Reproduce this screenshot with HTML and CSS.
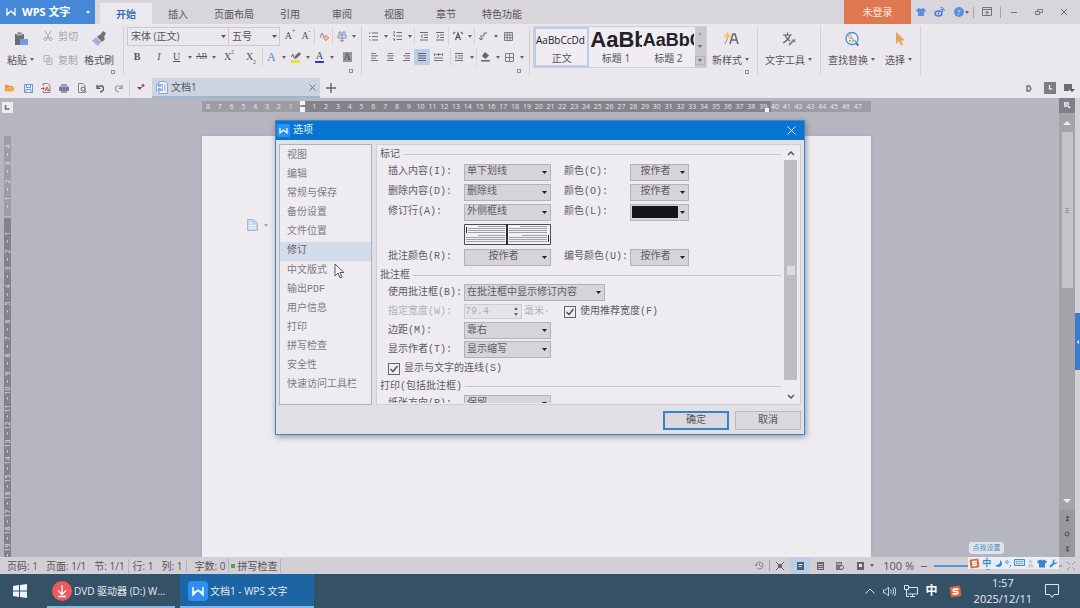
FILE: index.html
```html
<!DOCTYPE html>
<html lang="zh-CN">
<head>
    <meta charset="UTF-8">
    <meta name="viewport" content="width=device-width, initial-scale=1.0">
    <title>文档1 - WPS 文字</title>
    <link rel="stylesheet" href="styles.css">
</head>
<body>
    <!-- Title bar -->
    <header class="titlebar">
        <button class="brand">
            <svg width="10" height="10" viewBox="0 0 10 10"><path d="M1 1v7l4-4 4 4V1M1 8l2-3M9 8L7 5" fill="none" stroke="#fff" stroke-width="1.2"/></svg>
            <span>WPS 文字</span>
            <i class="caret"></i>
        </button>
        <nav class="tabs">
            <button class="tab active">开始</button>
            <button class="tab">插入</button>
            <button class="tab">页面布局</button>
            <button class="tab">引用</button>
            <button class="tab">审阅</button>
            <button class="tab">视图</button>
            <button class="tab">章节</button>
            <button class="tab">特色功能</button>
        </nav>
        <button class="login">未登录</button>
        <div class="window-tools">
            <button aria-label="皮肤"><svg width="10" height="10" viewBox="0 0 10 10"><path d="M3 1L0 3l1 2 1-.5V9h6V4.500l1 .5 1-2-3-2-2 1z" fill="#5b8fe6"/></svg></button>
            <button aria-label="微博"><svg width="11" height="10" viewBox="0 0 11 10"><ellipse cx="4.500" cy="6.500" rx="3.500" ry="2.500" fill="none" stroke="#4a80dc" stroke-width="1.500"/><circle cx="4.500" cy="6.500" r="1" fill="#4a80dc"/><path d="M6.500 2.500l2 0 0 2M6.500 .7c2.500-.5 4 1 3.500 3.500" fill="none" stroke="#4a80dc"/></svg></button>
            <button aria-label="帮助" class="help"><span>?</span><i class="caret"></i></button>
            <i class="bar-sep"></i>
            <button aria-label="隐藏功能区" class="wide"><svg width="10" height="10" viewBox="0 0 10 10"><path d="M.5 .5h9v8h-9zM.5 2.500h9M5 8V4.500M3 6.200L5 4.300l2 1.900" fill="none" stroke="#77757c"/></svg></button>
            <i class="bar-sep"></i>
            <button aria-label="最小化" class="win"><svg width="8" height="8" viewBox="0 0 8 8"><path d="M1 4.500h6" stroke="#77757c"/></svg></button>
            <button aria-label="还原" class="win"><svg width="8" height="8" viewBox="0 0 8 8"><path d="M.5 3.500h4v3h-4zM2.500 3.500v-2h5v3h-3" fill="none" stroke="#77757c"/></svg></button>
            <button aria-label="关闭" class="win"><svg width="8" height="8" viewBox="0 0 8 8"><path d="M1 1l6 6M7 1L1 7" stroke="#66646b"/></svg></button>
        </div>
    </header>

    <!-- Ribbon -->
    <section class="ribbon">
        <div class="group clipboard">
            <div class="group-body">
                <button class="big">
                    <svg width="16" height="16" viewBox="0 0 16 16"><path d="M2 3h9v11H2z" fill="#6d6b74"/><path d="M4 1h5v3H4z" fill="#8f8d96" stroke="#e9e7ec" stroke-width=".6"/><path d="M7 8h8v6H7z" fill="#6f9fe3"/></svg>
                    <span>粘贴<i class="caret"></i></span>
                </button>
                <div class="clip">
                    <button class="small"><svg width="10" height="10" viewBox="0 0 10 10"><path d="M2 0l4 7M8 0L4 7" stroke="#a5a3aa" fill="none"/><circle cx="2.500" cy="8" r="1.500" fill="none" stroke="#a5a3aa"/><circle cx="7.500" cy="8" r="1.500" fill="none" stroke="#a5a3aa"/></svg>剪切</button>
                    <button class="small"><svg width="10" height="10" viewBox="0 0 10 10"><path d="M1 .5h5v6H1zM4 3h5v6.500H4zM5.500 5h2M5.500 7h2" fill="#e9e7ec" stroke="#b5b3ba"/></svg>复制</button>
                </div>
                <button class="big painter">
                    <svg width="16" height="16" viewBox="0 0 16 16"><path d="M9 4l3-4 3 2-2 4 1 2-3 3-5-5 2-2z" fill="#74717a"/><path d="M5 6l5 5-3 4-6-5z" fill="#b9a3e2"/></svg>
                    <span>格式刷</span>
                </button>
            </div>
            <button class="launcher" aria-label="剪贴板"></button>
        </div>

        <div class="group">
            <div class="tool-row fonts">
                <select class="font-name" aria-label="字体"><option>宋体 (正文)</option></select>
                <select class="font-size" aria-label="字号"><option>五号</option></select>
                <button class="tool">A<sup>+</sup></button>
                <button class="tool">A<sup>-</sup></button>
                <i class="sep"></i>
                <button class="tool" aria-label="清除格式"><svg width="10" height="11" viewBox="0 0 10 11"><path d="M1 7l2-5 2 4" fill="none" stroke="#8a8890"/><path d="M4 7l3-3 3 3-3 3z" fill="#efb78d" stroke="#d08c60" stroke-width=".7"/></svg></button>
                <i class="sep"></i>
                <button class="tool drop" aria-label="拼音指南"><svg width="10" height="11" viewBox="0 0 10 11"><path d="M1 2h8M3 0v2M7 0v2" stroke="#6b93d8" fill="none"/><path d="M1 4h8v3H1zM5 3v8M3 9l2 1.500L7 9" stroke="#7c8cab" fill="none"/></svg><i class="caret"></i></button>
            </div>
            <div class="tool-row">
                <button class="tool w22"><b>B</b></button>
                <button class="tool w22"><em>I</em></button>
                <button class="tool drop"><u>U</u><i class="caret"></i></button>
                <button class="tool drop strike"><s>AB</s><i class="caret"></i></button>
                <button class="tool w22">X<sup>2</sup></button>
                <button class="tool w22">X<sub>2</sub></button>
                <i class="sep"></i>
                <button class="tool drop fx"><span>A</span><i class="caret"></i></button>
                <button class="tool drop" aria-label="突出显示"><svg width="10" height="11" viewBox="0 0 10 11"><path d="M0 8h9v3H0z" fill="#e6e03a"/><path d="M3 7l1-3 4-4 2 2-4 4z" fill="#6a6972"/><path d="M0 5l2-3 1 4" fill="none" stroke="#6a6972"/></svg><i class="caret"></i></button>
                <button class="tool drop color"><span>A</span><i class="caret"></i></button>
                <button class="tool w22 shade"><span>A</span></button>
            </div>
            <button class="launcher" aria-label="字体设置"></button>
        </div>

        <div class="group para">
            <div class="tool-row">
                <button class="tool drop" aria-label="项目符号"><svg width="9" height="9" viewBox="0 0 9 9"><path d="M0 1h1.500M0 4.500h1.500M0 8h1.500M3 1h6M3 4.500h6M3 8h6" stroke="#6e6c74"/></svg><i class="caret"></i></button>
                <button class="tool drop" aria-label="编号"><svg width="9" height="10" viewBox="0 0 9 10"><path d="M1 0v2.500M0 4h1.500v1.500M0 8h1.500v2M3.500 1.500H9M3.500 5H9M3.500 8.500H9" stroke="#6e6c74" fill="none"/></svg><i class="caret"></i></button>
                <i class="sep"></i>
                <button class="tool" aria-label="减少缩进"><svg width="8" height="9" viewBox="0 0 8 9"><path d="M0 .5h8M4 3h4M4 5.500h4M0 8h8M3 2.500L1 4.300l2 1.800" stroke="#6e6c74" fill="none"/></svg></button>
                <button class="tool" aria-label="增加缩进"><svg width="8" height="9" viewBox="0 0 8 9"><path d="M0 .5h8M4 3h4M4 5.500h4M0 8h8M1 2.500l2 1.800-2 1.800" stroke="#6e6c74" fill="none"/></svg></button>
                <i class="sep"></i>
                <button class="tool drop" aria-label="中文版式"><svg width="10" height="10" viewBox="0 0 10 10"><path d="M2.500 9L5 2l2.500 7M3.500 6.500h3M0 3l2-2M10 3L8 1" stroke="#55535a" fill="none" stroke-width="1.200"/></svg><i class="caret"></i></button>
                <i class="sep"></i>
                <button class="tool drop" aria-label="排序"><svg width="8" height="9" viewBox="0 0 8 9"><path d="M2 3v5M0 6l2 2 2-2M3 4h2V1h3" stroke="#6e6c74" fill="none"/></svg><i class="caret"></i></button>
                <button class="tool" aria-label="表格"><svg width="9" height="9" viewBox="0 0 9 9"><path d="M.5 .5h8v8h-8zM.5 3h8M.5 5.700h8M3.200 .5v8M6 .5v8" stroke="#7e7c84" fill="none"/></svg></button>
            </div>
            <div class="tool-row">
                <button class="tool" aria-label="左对齐"><svg width="7" height="8" viewBox="0 0 7 8"><path d="M0 .5h5M0 2.800h7M0 5.200h5M0 7.500h7" stroke="#77757d"/></svg></button>
                <button class="tool" aria-label="居中"><svg width="7" height="8" viewBox="0 0 7 8"><path d="M1 .5h5M0 2.800h7M1 5.200h5M0 7.500h7" stroke="#77757d"/></svg></button>
                <button class="tool" aria-label="右对齐"><svg width="7" height="8" viewBox="0 0 7 8"><path d="M2 .5h5M0 2.800h7M2 5.200h5M0 7.500h7" stroke="#77757d"/></svg></button>
                <button class="tool on" aria-label="两端对齐"><svg width="8" height="8" viewBox="0 0 8 8"><path d="M0 .5h8M0 2.800h8M0 5.200h8M0 7.500h8" stroke="#5f6877"/></svg></button>
                <button class="tool" aria-label="分散对齐"><svg width="9" height="8" viewBox="0 0 9 8"><path d="M.5 0v3M8.500 0v3M1.500 1.500h6M0 5h9M0 7.500h9M4.500 0v3" stroke="#77757d"/></svg></button>
                <i class="sep after-align"></i>
                <button class="tool drop" aria-label="行距"><svg width="8" height="8" viewBox="0 0 8 8"><path d="M0 .5h8M3 2.800h5M3 5.200h5M0 7.500h8M1 2v4" stroke="#6e6c74"/></svg><i class="caret"></i></button>
                <i class="sep"></i>
                <button class="tool drop" aria-label="底纹颜色"><svg width="9" height="10" viewBox="0 0 9 10"><path d="M4 0l4 3.500L4.500 7 1 4z" fill="#66646c"/><path d="M0 8h9v1.500H0z" fill="#66646c"/></svg><i class="caret"></i></button>
                <button class="tool drop" aria-label="边框"><svg width="9" height="9" viewBox="0 0 9 9"><path d="M.5 .5h8v8h-8zM4.500 .5v8M.5 4.500h8" stroke="#7e7c84" fill="none"/></svg><i class="caret"></i></button>
            </div>
            <button class="launcher" aria-label="段落设置"></button>
        </div>

        <div class="group styles">
            <div class="group-body">
                <div class="gallery">
                    <button class="style-cell selected"><span class="sample">AaBbCcDd</span><span>正文</span></button>
                    <button class="style-cell"><span class="sample h1">AaBb</span><span>标题 1</span></button>
                    <button class="style-cell"><span class="sample h2">AaBbC</span><span>标题 2</span></button>
                    <div class="gallery-scroll">
                        <i class="caret up"></i>
                        <i class="caret"></i>
                        <i class="caret more"></i>
                    </div>
                </div>
                <button class="big">
                    <svg width="16" height="16" viewBox="0 0 16 16"><path d="M7 13l3-10h2l3 10M9 9h4" fill="none" stroke="#66646c" stroke-width="1.500"/><path d="M2 13l3-7" stroke="#8f8d96"/><path d="M4.500 1v8M1 5h7M2 2.500l5 5M7 2.500l-5 5" stroke="#eebf4e"/></svg>
                    <span>新样式<i class="caret"></i></span>
                </button>
            </div>
            <button class="launcher" aria-label="样式设置"></button>
        </div>

        <div class="group">
            <div class="group-body">
                <button class="big">
                    <svg width="16" height="16" viewBox="0 0 16 16"><path d="M2 4h9M6.500 1.500V4M9 4c-1 4-3 6-7 8M4 4c1 3 3 5 5 6" fill="none" stroke="#66646c" stroke-width="1.200"/><path d="M8 14l3.500-3.500" stroke="#7d84a5" stroke-width="2"/><path d="M14 7l-1 2-2-1c-1 2 1 4 3.500 3z" fill="#7d84a5"/></svg>
                    <span>文字工具<i class="caret"></i></span>
                </button>
            </div>
        </div>

        <div class="group">
            <div class="group-body">
                <button class="big">
                    <svg width="16" height="16" viewBox="0 0 16 16"><circle cx="8" cy="7.500" r="6" fill="#f1f2f7" stroke="#4a8bd6" stroke-width="1.300"/><path d="M12 12l2.500 2.500" stroke="#3a78c8" stroke-width="2"/><circle cx="6" cy="5.500" r="1.600" fill="none" stroke="#d09a62"/><path d="M7 7l2 1M8.500 11c1-3 2-3 3 0M5 9l2 1.500" fill="none" stroke="#6d7486"/></svg>
                    <span>查找替换<i class="caret"></i></span>
                </button>
                <button class="big">
                    <svg width="16" height="16" viewBox="0 0 16 16"><path d="M5 1v12l3-3 2 4.500 2-1L10 9.500h4z" fill="#e2a45e"/></svg>
                    <span>选择<i class="caret"></i></span>
                </button>
            </div>
        </div>
    </section>

    <!-- Quick access and document tabs -->
    <section class="quickbar">
        <div class="quick-tools">
            <button aria-label="打开"><svg width="10" height="10" viewBox="0 0 10 10"><path d="M0 2h3.500l1 1H8v1.500H3L1 8.500H0z" fill="#e5973f"/><path d="M3 4.500h7l-2 4H1z" fill="#f0a94f"/></svg></button>
            <button aria-label="保存"><svg width="9" height="9" viewBox="0 0 9 9"><path d="M.5 .5h8v8h-8zM2.500 .5v3h4v-3M2 8.500v-3h5v3" fill="#eaf0fa" stroke="#6b98da"/></svg></button>
            <button aria-label="输出PDF"><svg width="10" height="10" viewBox="0 0 10 10"><path d="M2 3V.5h4.500l2.500 2V9.500H2V8" fill="none" stroke="#85838b"/><path d="M0 5.500h3M2 4l1.500 1.500L2 7M4 8l2-4 2 4-3-1.500" fill="none" stroke="#cf4b50"/></svg></button>
            <button aria-label="打印"><svg width="10" height="9" viewBox="0 0 10 9"><path d="M2 0h6v2H2zM2 6h6v3H2z" fill="#9a97b8"/><path d="M0 2.500h10V7H0z" fill="#7d7aa5"/></svg></button>
            <button aria-label="打印预览"><svg width="10" height="10" viewBox="0 0 10 10"><path d="M1.500 .5H6l2 2V9.500H1.500z" fill="none" stroke="#85838b"/><circle cx="6" cy="6" r="2" fill="#e9e7ec" stroke="#66646c"/><path d="M7.500 7.500L9.500 9.500" stroke="#66646c"/></svg></button>
            <button aria-label="撤销"><svg width="9" height="9" viewBox="0 0 9 9"><path d="M1 4c2-3 6-3 6.500 0S5 8 4 8M1 .8V4.300h3.500" fill="none" stroke="#5d5b63" stroke-width="1.300"/></svg></button>
            <button aria-label="恢复"><svg width="9" height="9" viewBox="0 0 9 9"><path d="M8 4C6 1 2 1 1.500 4S4 8 5 8M8 .8V4.300H4.500" fill="none" stroke="#96949b" stroke-width="1.200"/></svg></button>
            <i class="sep"></i>
            <button aria-label="自定义"><svg width="8" height="8" viewBox="0 0 8 8"><path d="M0 3h5L3 6z" fill="#55535a"/><circle cx="6" cy="1.500" r="1.500" fill="#e0433f"/></svg></button>
        </div>
        <div class="doc-tab">
            <svg width="12" height="13" viewBox="0 0 12 13"><path d="M3 .5h6l2.500 2.500v9.500H3z" fill="#f2f3f8" stroke="#8fa6c9"/><path d="M0 3h7v7H0z" fill="#8ab2e6"/><path d="M1.500 4.500v4M5.500 4.500v4M1.500 6.500h4" stroke="#fff"/><path d="M8 5h2M8 7h2M8 9h2" stroke="#8fa6c9"/></svg>
            <span>文档1</span>
            <button aria-label="关闭文档"><svg width="7" height="7" viewBox="0 0 7 7"><path d="M.5 .5l6 6M6.500 .5l-6 6" stroke="#66707f"/></svg></button>
        </div>
        <button class="add-tab" aria-label="新建文档"><svg width="10" height="10" viewBox="0 0 10 10"><path d="M5 0v10M0 5h10" stroke="#66646c" stroke-width="1.400"/></svg></button>
        <div class="quick-right">
            <svg width="6" height="7" viewBox="0 0 6 7"><path d="M1 1h2.500L5 3.500 3.500 6H1z" fill="none" stroke="#77757d" stroke-width="1.500"/></svg>
            <svg width="12" height="12" viewBox="0 0 12 12"><path d="M0 0h12v12H0z" fill="#7e7c85"/><path d="M5.500 3v4h3" fill="none" stroke="#fff" stroke-width="1.200"/></svg>
            <svg width="11" height="10" viewBox="0 0 11 10"><path d="M0 1h8v5H5v2H0z" fill="#6e6c75"/><path d="M5 6h6L8 9z" fill="#55535b"/></svg>
        </div>
    </section>

    <!-- Document area -->
    <main class="workspace">
        <div class="v-side">
            <button class="tab-stop" aria-label="制表符"><svg width="11" height="11" viewBox="0 0 11 11"><path d="M3.500 3v4h4" fill="none" stroke="#66646c" stroke-width="1.500"/></svg></button>
            <div class="v-ruler" id="vRuler"></div>
        </div>
        <div class="canvas">
            <div class="h-ruler" id="hRuler"></div>
            <div class="paper"></div>
        </div>
        <div class="v-scroll">
            <button class="scroll-head" aria-label="选择"><svg width="9" height="9" viewBox="0 0 9 9"><path d="M1 1h5v5H1z" fill="#d8d7dd"/><path d="M4 4l4 2-2 2zM3 3h2" fill="#fff" stroke="#7f7f87" stroke-width=".5"/></svg></button>
            <button class="scroll-up" aria-label="向上滚动"><i class="caret up"></i></button>
            <div class="thumb"><i></i><i></i><i></i></div>
            <button class="scroll-down" aria-label="向下滚动"><i class="caret"></i></button>
            <div class="browse">
                <svg width="5" height="7" viewBox="0 0 5 7"><path d="M.5 3l2-2.500 2 2.500zM.5 6l2-2.500 2 2.500z" fill="#4c4b53"/></svg>
                <svg width="6" height="6" viewBox="0 0 6 6"><circle cx="3" cy="3" r="2" fill="none" stroke="#4c4b53"/></svg>
                <svg width="5" height="7" viewBox="0 0 5 7"><path d="M.5 .5l2 2.500 2-2.500zM.5 3.500l2 2.500 2-2.500z" fill="#4c4b53"/></svg>
            </div>
        </div>
        <div class="edge"><button class="edge-tab" aria-label="任务窗格"></button></div>

        <div class="paste-hint">
            <svg width="11" height="12" viewBox="0 0 11 12"><path d="M.5 .5h6l4 3.500v7.500H.5z" fill="#c5d6ea" stroke="#a3bad6"/><path d="M2 4h3M2 6.500h7M2 9h7" stroke="#fff"/></svg>
            <i class="caret"></i>
        </div>

        <!-- Options dialog -->
        <div class="dialog" role="dialog" aria-label="选项">
            <div class="dialog-title">
                <svg width="13" height="13" viewBox="0 0 13 13"><rect width="13" height="13" rx="2" fill="#2b93f0"/><path d="M3 4v5l3.500-3L10 9V4" fill="none" stroke="#fff" stroke-width="1.200"/></svg>
                <span>选项</span>
                <button aria-label="关闭"><svg width="9" height="9" viewBox="0 0 9 9"><path d="M.5 .5l8 8M8.500 .5l-8 8" stroke="#d9eafb"/></svg></button>
            </div>
            <div class="dialog-body">
                <ul class="categories">
                    <li>视图</li>
                    <li>编辑</li>
                    <li>常规与保存</li>
                    <li>备份设置</li>
                    <li>文件位置</li>
                    <li class="current">修订</li>
                    <li>中文版式</li>
                    <li>输出PDF</li>
                    <li>用户信息</li>
                    <li>打印</li>
                    <li>拼写检查</li>
                    <li>安全性</li>
                    <li>快速访问工具栏</li>
                </ul>
                <div class="panel">
                    <form class="options">
                        <h3>标记</h3>
                        <div class="row">
                            <label for="insert">插入内容(I):</label>
                            <select id="insert"><option>单下划线</option></select>
                            <label for="insertColor">颜色(C):</label>
                            <select id="insertColor" class="by-author"><option>按作者</option></select>
                        </div>
                        <div class="row">
                            <label for="remove">删除内容(D):</label>
                            <select id="remove"><option>删除线</option></select>
                            <label for="removeColor">颜色(O):</label>
                            <select id="removeColor" class="by-author"><option>按作者</option></select>
                        </div>
                        <div class="row">
                            <label for="lines">修订行(A):</label>
                            <select id="lines"><option>外侧框线</option></select>
                            <label for="linesColor">颜色(L):</label>
                            <select id="linesColor" class="swatch"><option></option></select>
                        </div>
                        <svg class="preview" width="87" height="21" viewBox="0 0 87 21">
                            <path d="M.5 .5h86v20H.5z" fill="#f2f0f5" stroke="#4b4a50"/>
                            <path d="M43 0v21" stroke="#2d2c31" stroke-width="2"/>
                            <path d="M14 2.500h27M4 4.500h37M4 6.500h37M4 8.500h37M14 11.500h27M2 13.500h39M2 15.500h39M2 17.500h39M56 2.500h27M45 4.500h38M45 6.500h38M45 8.500h38M58 11.500h25M45 13.500h38M45 15.500h38M45 17.500h38" stroke="#a3a2a8"/>
                            <path d="M2.500 3v6M84.500 11v7" stroke="#2d2c31"/>
                        </svg>
                        <div class="row">
                            <label for="noteColor">批注颜色(R):</label>
                            <select id="noteColor" class="centered"><option>按作者</option></select>
                            <label for="numColor">编号颜色(U):</label>
                            <select id="numColor" class="by-author"><option>按作者</option></select>
                        </div>

                        <h3>批注框</h3>
                        <div class="row tight">
                            <label for="balloon">使用批注框(B):</label>
                            <select id="balloon" class="long"><option>在批注框中显示修订内容</option></select>
                        </div>
                        <div class="row tight">
                            <label for="width" class="off">指定宽度(W):</label>
                            <span class="spin"><input type="text" id="width" value="79.4" disabled><span><i class="caret up"></i><i class="caret"></i></span></span>
                            <span class="unit">毫米·</span>
                            <input type="checkbox" id="useWidth" checked>
                            <label for="useWidth" class="check-label">使用推荐宽度(F)</label>
                        </div>
                        <div class="row tight">
                            <label for="margin">边距(M):</label>
                            <select id="margin"><option>靠右</option></select>
                        </div>
                        <div class="row tight">
                            <label for="author">显示作者(T):</label>
                            <select id="author"><option>显示缩写</option></select>
                        </div>
                        <div class="row tight">
                            <input type="checkbox" id="connect" checked>
                            <label for="connect" class="check-label">显示与文字的连线(S)</label>
                        </div>

                        <h3>打印(包括批注框)</h3>
                        <div class="row tight">
                            <label for="paper">纸张方向(P):</label>
                            <select id="paper"><option>保留</option></select>
                        </div>
                    </form>
                    <div class="panel-scroll">
                        <svg width="14" height="15" viewBox="0 0 14 15"><path d="M4 10l3-3 3 3" fill="none" stroke="#55545a" stroke-width="1.500"/></svg>
                        <div class="panel-track"><i></i></div>
                        <svg width="14" height="24" viewBox="0 0 14 24"><path d="M4 15l3 3 3-3" fill="none" stroke="#55545a" stroke-width="1.500"/></svg>
                    </div>
                </div>
            </div>
            <div class="dialog-foot">
                <button class="default">确定</button>
                <button>取消</button>
            </div>
        </div>

        <svg class="pointer" width="11" height="16" viewBox="0 0 11 16"><path d="M1 1v12l3-3 2 5 2-1-2-4.500h4z" fill="#f5f4f8" stroke="#55545a"/></svg>
    </main>

    <!-- Status bar -->
    <footer class="statusbar">
        <div class="status-left">
            <span>页码: 1</span>
            <span>页面: 1/1</span>
            <span class="cut">节: 1/1</span>
            <span>行: 1</span>
            <span class="cut">列: 1</span>
            <span class="cut count">字数: 0</span>
            <span class="cut spell">拼写检查</span>
        </div>
        <div class="status-right">
            <button aria-label="历史"><svg width="9" height="9" viewBox="0 0 9 9"><path d="M1 4.500a3.500 3.500 0 1 1 1 2.500M0 3l1 2 1.500-1.500M4.500 2.500v2l2 1" fill="none" stroke="#85838a"/></svg></button>
            <i class="bar-sep"></i>
            <button aria-label="全屏"><svg width="8" height="8" viewBox="0 0 8 8"><path d="M2 2h4v4H2z" fill="#66646b"/><path d="M0 0l2 2M8 0L6 2M0 8l2-2M8 8L6 6" stroke="#66646b"/></svg></button>
            <button class="on" aria-label="页面视图"><svg width="7" height="8" viewBox="0 0 7 8"><path d="M0 0h7v8H0z" fill="#4f5f78"/><path d="M1.500 2.500h4M1.500 4.500h3" stroke="#dbe4f2"/></svg></button>
            <button aria-label="大纲视图"><svg width="7" height="8" viewBox="0 0 7 8"><path d="M0 0h7v8H0z" fill="#66646b"/><path d="M1 2.500h5M1 4.500h5M1 6.500h5" stroke="#d3d0d5" stroke-width=".8"/></svg></button>
            <button aria-label="Web视图"><svg width="8" height="8" viewBox="0 0 8 8"><path d="M0 0h6v8H0z" fill="#77757c"/><circle cx="5.500" cy="5.500" r="2" fill="#d3d0d5" stroke="#66646b"/><path d="M1 2h4" stroke="#d3d0d5"/></svg></button>
            <button class="view-drop" aria-label="阅读视图"><svg width="7" height="8" viewBox="0 0 7 8"><path d="M0 0h7v8H0z" fill="#66646b"/><path d="M2 2h3v3H2z" fill="#e6e4ea"/></svg><i class="caret"></i></button>
            <span class="zoom">100 %</span>
            <button class="minus" aria-label="缩小"><svg width="6" height="6" viewBox="0 0 6 6"><path d="M0 3.500h6" stroke="#66646b"/></svg></button>
            <input type="range" class="zoom-range" aria-label="显示比例" min="0" max="100" value="42">
            <button class="grow" aria-label="展开"><svg width="8" height="8" viewBox="0 0 8 8"><path d="M0 0l2.500 2.500M8 0L5.500 2.500M0 8l2.500-2.500M8 8L5.500 5.500" stroke="#77757c" stroke-dasharray="1.500 .7"/></svg></button>
        </div>
        <!-- Input method bar floats above the status bar -->
        <div class="ime">
            <div class="ime-tip">点我设置</div>
            <div class="ime-bar">
                <svg width="11" height="11" viewBox="0 0 11 11"><rect x="1" y="1" width="9" height="9" rx="1.500" fill="#e0673a" transform="rotate(-8 5.500 5.500)"/><path d="M8 3.500H4.500a1 1 0 0 0 0 2h2a1 1 0 0 1 0 2H3" fill="none" stroke="#fff" stroke-width="1.300"/></svg>
                <b>中</b>
                <svg width="9" height="9" viewBox="0 0 9 9"><path d="M6 1c1 3-1 5-5 5.500C4 9 8 8 8 4.500 8 3 7 1.500 6 1z" fill="#3d83cf"/></svg>
                <svg width="7" height="9" viewBox="0 0 7 9"><circle cx="2" cy="3" r="1.300" fill="none" stroke="#3d83cf" stroke-width=".8"/><path d="M5.500 6v1.500l-1 1" fill="none" stroke="#3d83cf"/></svg>
                <svg width="11" height="8" viewBox="0 0 11 8"><path d="M.5 .5h10v6H.5z" fill="#cfe2f7" stroke="#4b8dd5"/><path d="M2 2.500h7M2 4.500h7" stroke="#4b8dd5" stroke-dasharray="1 .6"/></svg>
                <svg width="7" height="9" viewBox="0 0 7 9"><circle cx="3.500" cy="2.500" r="1.800" fill="#c9ced8"/><path d="M.5 8.500c0-5 6-5 6 0z" fill="#c9ced8"/></svg>
                <svg width="10" height="9" viewBox="0 0 10 9"><path d="M3 .5L0 2.500l1 2 1-.5v4.500h6V4l1 .5 1-2L7 .5l-2 1z" fill="#3d83cf"/></svg>
                <svg width="9" height="9" viewBox="0 0 9 9"><path d="M1 8l4-4" stroke="#3d83cf" stroke-width="2"/><path d="M8.500 2.500L7 4 5.500 3.500 5 2 6.500 .5C4 0 3 2 4 4s4 1.500 4.500-1.500z" fill="#3d83cf"/></svg>
            </div>
        </div>
    </footer>

    <!-- Taskbar -->
    <footer class="taskbar">
        <button class="start" aria-label="开始菜单"><svg width="14" height="14" viewBox="0 0 14 14"><path d="M0 2l6-1v5.500H0zM7 .900L14 0v6.500H7zM0 7.500h6V13l-6-1zM7 7.500h7V14l-7-.9z" fill="#f1f5f9"/></svg></button>
        <button class="task">
            <svg width="20" height="20" viewBox="0 0 20 20"><circle cx="10" cy="10" r="10" fill="#ef5a5c"/><path d="M10 4v9M6 9.500l4 4 4-4M6 15.500h8" fill="none" stroke="#fff" stroke-width="1.300"/></svg>
            <span>DVD 驱动器 (D:) W...</span>
        </button>
        <button class="task current">
            <svg width="20" height="20" viewBox="0 0 20 20"><rect width="20" height="20" rx="4" fill="#2e8ff2"/><path d="M5 6v8l5-5 5 5V6M5 14l2.500-4M15 14l-2.500-4" fill="none" stroke="#fff" stroke-width="1.500"/></svg>
            <span>文档1 - WPS 文字</span>
        </button>
        <div class="tray">
            <svg width="10" height="6" viewBox="0 0 10 6"><path d="M.5 5.500L5 1l4.500 4.500" fill="none" stroke="#dfe6ec"/></svg>
            <svg width="13" height="11" viewBox="0 0 13 11"><path d="M.5 4h2L5.500 1v9l-3-3h-2zM7.500 3.500c1 1.500 1 2.500 0 4M9.500 2c1.500 2 1.500 5 0 7M11.500 1c1.500 2.500 1.500 6.500 0 9" fill="none" stroke="#dfe6ec" stroke-width=".9"/></svg>
            <svg width="14" height="12" viewBox="0 0 14 12"><path d="M4 2.500h9.500v6.500H4M8.500 9v2M6 11.500h5M.5 .5h4v4h-4zM2.500 4.500V11.500H5" fill="none" stroke="#dfe6ec"/></svg>
            <b>中</b>
            <svg width="13" height="13" viewBox="0 0 11 11"><rect x="1" y="1" width="9" height="9" rx="1.500" fill="#e0673a" transform="rotate(-8 5.500 5.500)"/><path d="M8 3.500H4.500a1 1 0 0 0 0 2h2a1 1 0 0 1 0 2H3" fill="none" stroke="#fff" stroke-width="1.300"/></svg>
            <div class="clock"><span>1:57</span><span>2025/12/11</span></div>
            <svg width="14" height="14" viewBox="0 0 14 14"><path d="M.5 .5h13v10H9l-2 3-2-3H.5z" fill="none" stroke="#dfe6ec"/></svg>
        </div>
    </footer>

    <script>
        // Fill a ruler: numbers count down to the margin, then up to the end
        function buildRuler(id, before, after) {
            const ruler = document.getElementById(id);
            for (let n = -before; n <= after; n++) {
                const cell = document.createElement('span');
                if (n === 0) {
                    cell.className = 'zero';
                } else {
                    cell.textContent = Math.abs(n);
                }
                ruler.appendChild(cell);
            }
        }
        buildRuler('hRuler', 8, 47);
        buildRuler('vRuler', 4, 19);
        document.querySelector('#hRuler span:nth-child(48)').classList.add('right-indent');
    </script>
</body>
</html>
```
FILE: styles.css
```css
* {
    box-sizing: border-box;
}
body {
    margin: 0;
    height: 100vh;
    display: flex;
    flex-direction: column;
    overflow: hidden;
    font-family: "Open Sans", "Noto Sans CJK SC", sans-serif;
    font-size: 10px;
    line-height: 14px;
    color: #55535a;
    background-color: #b6b6c0;
}
button, select, input {
    margin: 0;
    padding: 0;
    border: none;
    background: none;
    font: inherit;
    color: inherit;
}
button {
    display: flex;
    align-items: center;
    justify-content: center;
    white-space: nowrap;
}
svg {
    display: block;
    flex: none;
}
.caret {
    flex: none;
    display: inline-block;
    border: 2px solid transparent;
    border-top: 3px solid #66646b;
    border-bottom: none;
}
.caret.up {
    border-top: none;
    border-bottom: 3px solid #66646b;
}
.sep {
    width: 1px;
    height: 18px;
    background-color: #d6d4da;
    flex: none;
}
.bar-sep {
    width: 1px;
    height: 11px;
    background-color: #a5a3aa;
}

/* Title bar */
.titlebar {
    display: flex;
    height: 24px;
    flex: none;
    background-color: #d8d5db;
}
.brand {
    width: 95px;
    gap: 6px;
    background-color: #4688d8;
    color: #fff;
    font-size: 11px;
    font-weight: bold;
    justify-content: flex-start;
    padding-left: 6px;
}
.brand .caret {
    border-top-color: #fff;
    margin-left: auto;
    margin-right: 5px;
}
.tabs {
    display: flex;
    flex: 1;
    padding: 3px 0 0 5px;
}
.tab {
    min-width: 52px;
    padding: 0 10px;
}
.tab.active {
    background-color: #ebe9ee;
    color: #3a6fb8;
    font-weight: bold;
}
.login {
    width: 67px;
    background-color: #df7750;
    color: #fbe9e0;
}
.window-tools {
    display: flex;
    align-items: center;
    width: 169px;
}
.window-tools button {
    width: 19px;
}
.window-tools button.help {
    width: 24px;
    gap: 1px;
}
.help span {
    width: 10px;
    height: 10px;
    line-height: 10px;
    border-radius: 50%;
    background-color: #5b8fe6;
    color: #dfe9fb;
    font-size: 8px;
}
.window-tools button.wide {
    width: 26px;
}
.window-tools button.win {
    width: 25px;
}

/* Ribbon */
.ribbon {
    display: flex;
    flex: none;
    height: 54px;
    padding-top: 2px;
    background-color: #eae8ed;
}
.group {
    display: flex;
    flex-direction: column;
    height: 49px;
    padding: 0 3px 0 2px;
    border-right: 1px solid #d3d1d7;
}
.group.para {
    padding-left: 4px;
}
.group-body {
    display: flex;
    height: 43px;
}
.launcher {
    align-self: flex-end;
    width: 4px;
    height: 4px;
    margin: 1px 5px 0 0;
    border: 1px solid #8f8d95;
}
.big {
    flex-direction: column;
    justify-content: flex-start;
    gap: 6px;
    padding: 5px 5px 0;
}
.big .caret {
    margin: 0 0 3px 3px;
}
.clipboard .big {
    padding-right: 2px;
}
.clip {
    display: flex;
    flex-direction: column;
    gap: 10px;
    padding: 3px 0 0 7px;
    color: #a5a3aa;
}
.small {
    gap: 5px;
}
.clipboard .painter {
    margin-left: 1px;
    padding-right: 6px;
}
.tool-row {
    display: flex;
    align-items: center;
    height: 22px;
}
.tool-row.fonts {
    padding-left: 1px;
    height: 20px;
}
.tool-row + .tool-row {
    height: 22px;
}
.para .tool-row:first-child {
    height: 20px;
}
.tool {
    width: 16px;
    height: 16px;
    font-family: "Liberation Serif", serif;
}
.tool.w22 {
    width: 22px;
}
.tool.drop {
    width: 24px;
    justify-content: space-between;
    padding: 0 2px 0 3px;
}
.tool.strike {
    padding-left: 2px;
    font-size: 8px;
}
.tool.on {
    background-color: #bccde6;
}
.tool sup, .tool sub {
    font-size: 6px;
    line-height: 6px;
}
.tool sup {
    align-self: flex-start;
}
.tool sub {
    align-self: flex-end;
}
.tool + .sep {
    margin-right: 1px;
}
.tool + .sep.after-align {
    margin-left: 4px;
}
.fx span {
    color: #4f86cc;
    font-size: 12px;
}
.color span {
    line-height: 10px;
    border-bottom: 2px solid #2a38c4;
    padding: 0 1px;
}
.shade span {
    width: 9px;
    line-height: 10px;
    background-color: #97959d;
}
.font-name, .font-size {
    height: 19px;
    padding-left: 3px;
    border: 1px solid #cbc9d0;
    appearance: none;
    background: url("data:image/svg+xml,%3Csvg xmlns='http://www.w3.org/2000/svg' width='5' height='3'%3E%3Cpath d='M0 0h5L2.500 3z' fill='%2355535a'/%3E%3C/svg%3E") no-repeat right 2px center;
}
.font-name {
    width: 102px;
}
.font-size {
    width: 52px;
    margin: 0 2px 0 -1px;
}
.gallery {
    display: flex;
    width: 174px;
    height: 42px;
    margin-left: 1px;
    border: 1px solid #d0ced5;
    background-color: #efedf2;
}
.style-cell {
    flex: 1;
    min-width: 0;
    flex-direction: column;
    justify-content: space-between;
    padding-bottom: 2px;
    margin-right: 1px;
    overflow: hidden;
}
.style-cell.selected {
    border: 2px solid #c0cce6;
    padding-bottom: 0;
}
.sample {
    width: 100%;
    line-height: 22px;
    text-align: left;
    overflow: hidden;
    color: #222126;
}
.sample.h1 {
    font: bold 22px/26px "Liberation Sans", sans-serif;
}
.sample.h2 {
    font: bold 18px/26px "Liberation Sans", sans-serif;
}
.gallery-scroll {
    display: flex;
    flex-direction: column;
    align-items: center;
    justify-content: space-around;
    width: 11px;
    background-color: #cac8ce;
}
.gallery-scroll .up {
    opacity: .4;
}
.caret.more {
    outline: 1px solid #b5b3ba;
    outline-offset: 2px;
}

/* Quick access */
.quickbar {
    display: flex;
    flex: none;
    height: 20px;
    background-color: #eae8ed;
}
.quick-tools {
    display: flex;
    align-items: center;
    width: 152px;
    padding-left: 1px;
}
.quick-tools button {
    width: 18px;
}
.quick-tools .sep {
    margin: 0 2px;
}
.doc-tab {
    display: flex;
    align-items: center;
    gap: 3px;
    width: 168px;
    padding: 0 4px;
    background-color: #ccd4e2;
    border-bottom: 2px solid #9fb6d2;
}
.doc-tab span {
    flex: 1;
}
.add-tab {
    width: 22px;
}
.quick-right {
    display: flex;
    align-items: center;
    gap: 12px;
    margin-left: auto;
    padding-right: 5px;
}
.quick-right svg:last-child {
    margin-left: -4px;
}

/* Document area */
.workspace {
    position: relative;
    display: flex;
    flex: 1;
    min-height: 0;
}
.v-side {
    display: flex;
    flex-direction: column;
    width: 14px;
    padding: 4px 0 0 2px;
}
.tab-stop {
    width: 11px;
    height: 11px;
    background-color: #eeecf1;
}
.v-ruler {
    display: flex;
    flex: 1;
    flex-direction: column;
    width: 7px;
    margin: 23px 0 0 2px;
    padding-top: 2px;
    background: linear-gradient(#9d9da5 80px, #83838b 80px);
    color: #e3e2e8;
    font-size: 7px;
    line-height: 7px;
}
.v-ruler span {
    display: flex;
    align-items: center;
    justify-content: center;
    flex: 1;
    writing-mode: vertical-rl;
    transform: rotate(180deg);
    background: linear-gradient(#e3e2e8, #e3e2e8) center top / 1px 2px no-repeat;
}
.v-ruler .zero {
    background: linear-gradient(#e3e2e8, #e3e2e8) center / 7px 1px no-repeat;
}
.canvas {
    display: flex;
    flex: 1;
    flex-direction: column;
    align-items: center;
    padding-top: 3px;
}
.h-ruler {
    display: flex;
    width: 64%;
    height: 11px;
    padding-right: 7px;
    background: linear-gradient(to right, #9c9ca4 15%, #83838b 15%, #83838b 85%, #9c9ca4 85%);
    color: #e8e7ec;
    font-size: 7px;
    line-height: 11px;
    text-align: center;
}
.h-ruler span {
    flex: 1 0 0;
    min-width: 0;
}
.h-ruler .zero {
    background: linear-gradient(#f4f3f7, #f4f3f7) center top / 5px 4px no-repeat, linear-gradient(#f4f3f7, #f4f3f7) center bottom / 5px 5px no-repeat;
}
.h-ruler .right-indent {
    background: linear-gradient(#f4f3f7, #f4f3f7) right bottom / 4px 4px no-repeat;
}
.paper {
    flex: 1;
    width: 64%;
    margin-top: 24px;
    background-color: #eeecf1;
    box-shadow: 0 0 3px #a2a2ab;
}
.v-scroll {
    display: flex;
    flex-direction: column;
    align-items: center;
    width: 16px;
    background-color: #a3a3aa;
}
.v-scroll .caret {
    border-width: 4px;
    border-bottom-width: 0;
    border-top-color: #eeecf1;
}
.v-scroll .caret.up {
    border-width: 0 4px 4px;
    border-bottom-color: #eeecf1;
}
.scroll-head {
    width: 16px;
    height: 15px;
    background-color: #7f7f87;
}
.scroll-up, .scroll-down {
    height: 19px;
}
.thumb {
    display: flex;
    flex-direction: column;
    align-items: center;
    justify-content: center;
    gap: 1px;
    width: 11px;
    height: 34%;
    background-color: #c4c3ca;
}
.thumb i {
    width: 4px;
    height: 1px;
    background-color: #96969e;
}
.scroll-down {
    margin-top: auto;
}
.browse {
    display: flex;
    flex-direction: column;
    align-items: center;
    justify-content: space-around;
    width: 16px;
    height: 47px;
    background-color: #98989f;
}
.edge {
    display: flex;
    align-items: center;
    width: 5px;
    padding-top: 28px;
    background-color: #d3d1d7;
}
.edge-tab {
    width: 5px;
    height: 57px;
    background-color: #3d7ccb;
}
.edge-tab::before {
    content: "";
    border: 2px solid transparent;
    border-right-color: #fff;
    border-left: none;
}
.paste-hint {
    position: absolute;
    left: 247px;
    top: 121px;
    display: flex;
    align-items: center;
    gap: 6px;
}
.paste-hint .caret {
    border-top-color: #a9a8b0;
}
.pointer {
    position: absolute;
    left: 334px;
    top: 165px;
}

/* Options dialog */
.dialog {
    position: absolute;
    left: 275px;
    top: 22px;
    width: 530px;
    border: 1px solid #3f86c4;
    background-color: #e2e0e6;
    box-shadow: 1px 2px 6px rgba(60, 60, 80, .5);
    font-family: "Liberation Mono", "Noto Sans CJK SC", monospace;
}
.dialog-title {
    display: flex;
    align-items: center;
    gap: 3px;
    height: 19px;
    padding: 0 8px 0 1px;
    background-color: #0776d2;
    color: #e6f1fb;
}
.dialog-title span {
    flex: 1;
}
.dialog-body {
    display: flex;
    gap: 4px;
    height: 265px;
    padding: 4px 3px 0;
}
.categories {
    display: flex;
    flex-direction: column;
    width: 93px;
    margin: 0;
    padding: 1px 0 9px;
    list-style: none;
    border: 1px solid #b2b0b8;
    background-color: #eeecf1;
    color: #7d7b83;
}
.categories li {
    display: flex;
    flex: 1;
    align-items: center;
    padding-left: 7px;
}
.categories .current {
    background-color: #d3dceb;
    color: #66646b;
}
.panel {
    display: flex;
    flex: 1;
    min-width: 0;
    border: 1px solid #d0ced5;
    background-color: #eeecf1;
}
.options {
    flex: 1;
    min-width: 0;
    margin-bottom: 1px;
    padding: 4px 3px 0;
    overflow: hidden;
    color: #5d5b62;
}
.options h3 {
    display: flex;
    align-items: center;
    gap: 3px;
    margin: 0 0 2px;
    font-size: 10px;
    font-weight: normal;
    line-height: 11px;
}
.options h3::after {
    content: "";
    flex: 1;
    height: 1px;
    background-color: #c8c6cc;
}
.row + h3 {
    margin-top: 3px;
}
.row {
    display: flex;
    align-items: center;
    height: 20px;
    padding-left: 8px;
    white-space: nowrap;
}
.row.tight {
    height: 19px;
}
.row label {
    width: 76px;
    flex: none;
}
.row select {
    width: 87px;
    height: 17px;
    padding: 0 12px 0 2px;
    border: 1px solid #b4b2b9;
    appearance: none;
    background: #d6d4da url("data:image/svg+xml,%3Csvg xmlns='http://www.w3.org/2000/svg' width='5' height='3'%3E%3Cpath d='M0 0h5L2.500 3z' fill='%23222126'/%3E%3C/svg%3E") no-repeat right 3px center;
}
.row select + label {
    width: 66px;
    margin-left: 13px;
}
.row select.by-author, .row select.swatch {
    width: 59px;
}
.row select.by-author, .row select.centered {
    padding-left: 4px;
    text-align-last: center;
}
.row select.long {
    width: 141px;
}
.row select.swatch {
    background-image: url("data:image/svg+xml,%3Csvg xmlns='http://www.w3.org/2000/svg' width='5' height='3'%3E%3Cpath d='M0 0h5L2.500 3z' fill='%23222126'/%3E%3C/svg%3E"), linear-gradient(#151417, #151417);
    background-position: right 3px center, 1px center;
    background-size: 5px 3px, 46px 12px;
}
.preview {
    margin: 2px 0 2px 84px;
}
.off, .unit, .spin input {
    color: #b1afb6;
}
.spin {
    display: flex;
    width: 58px;
    height: 15px;
    border: 1px solid #d0ced5;
    background-color: #e6e4ea;
}
.spin input {
    flex: 1;
    min-width: 0;
}
.spin > span {
    display: flex;
    flex-direction: column;
    justify-content: center;
    gap: 3px;
    width: 10px;
    padding-left: 3px;
}
.spin .caret {
    align-self: flex-start;
}
.unit {
    width: 42px;
    padding-left: 2px;
}
.row input[type="checkbox"] {
    appearance: none;
    flex: none;
    width: 12px;
    height: 12px;
    border: 1px solid #66646b;
    background: url("data:image/svg+xml,%3Csvg xmlns='http://www.w3.org/2000/svg' width='10' height='10'%3E%3Cpath d='M1.500 5L4 7.500 8.500 2' fill='none' stroke='%23444249' stroke-width='1.200'/%3E%3C/svg%3E") center no-repeat;
}
.row .check-label {
    width: auto;
    margin-left: 4px;
}
.panel-scroll {
    display: flex;
    flex-direction: column;
    width: 16px;
}
.panel-track {
    display: flex;
    align-items: center;
    justify-content: center;
    flex: 1;
    width: 13px;
    background-color: #bfbdc2;
}
.panel-track i {
    width: 8px;
    height: 9px;
    background-color: #dddbe1;
}
.dialog-foot {
    display: flex;
    justify-content: flex-end;
    gap: 6px;
    padding: 6px 3px 4px;
}
.dialog-foot button {
    width: 66px;
    height: 19px;
    border: 1px solid #bab8bf;
    background-color: #dad8de;
}
.dialog-foot .default {
    border: 2px solid #3583c2;
}

/* Status bar */
.statusbar {
    position: relative;
    display: flex;
    align-items: center;
    justify-content: space-between;
    flex: none;
    height: 17px;
    background-color: #d3d0d5;
}
.status-left, .status-right {
    display: flex;
    align-items: center;
}
.status-left {
    gap: 8px;
    padding-left: 7px;
}
.status-left .cut {
    padding-right: 3px;
    margin-right: -4px;
    border-right: 1px solid #b5b3ba;
}
.status-left .count {
    margin-left: 4px;
}
.status-left .spell::before {
    content: "";
    display: inline-block;
    width: 4px;
    height: 4px;
    margin: 0 2px 2px 0;
    background-color: #47a35c;
}
.status-left .spell {
    margin-left: -2px;
}
.status-right button {
    width: 20px;
    height: 17px;
}
.status-right button.on {
    background-color: #bccde6;
}
.status-right button.view-drop {
    width: 30px;
    gap: 6px;
}
.status-right button.grow {
    width: 18px;
}
.zoom {
    margin-left: 3px;
    font-size: 11px;
}
.zoom-range {
    appearance: none;
    width: 128px;
    height: 2px;
    background: linear-gradient(to right, #5b93d8 42%, #a5a3aa 42%);
}
.zoom-range::-webkit-slider-thumb {
    appearance: none;
    width: 8px;
    height: 8px;
    border-radius: 50%;
    border: 1px solid #85838a;
    background-color: #e9e7ec;
}
.ime {
    position: absolute;
    right: 21px;
    bottom: 5px;
}
.ime-tip {
    width: 35px;
    margin: 0 0 3px 1px;
    border-radius: 3px;
    background-color: #dbe6f2;
    color: #5f87a5;
    font-size: 7px;
    line-height: 12px;
    text-align: center;
}
.ime-bar {
    display: flex;
    align-items: center;
    justify-content: space-between;
    width: 91px;
    height: 12px;
    padding: 0 1px;
    background-color: #e8eef7;
    color: #3d83cf;
    font-size: 9px;
    line-height: 12px;
}

/* Taskbar */
.taskbar {
    display: flex;
    flex: none;
    height: 34px;
    background-color: #355166;
    color: #e6ecf2;
}
.start {
    width: 40px;
    margin-right: 7px;
}
.task {
    width: 128px;
    margin-right: 5px;
    padding: 1px 0 0 5px;
    gap: 2px;
    justify-content: flex-start;
    border-bottom: 2px solid #86b7e6;
}
.task.current {
    width: 134px;
    padding-left: 8px;
    background-color: #1d64a3;
}
.tray {
    display: flex;
    align-items: center;
    gap: 8px;
    margin-left: auto;
    padding-right: 21px;
}
.tray b {
    margin-right: 3px;
    font-size: 12px;
    color: #fff;
}
.clock {
    display: flex;
    flex-direction: column;
    align-items: center;
    margin: 0 5px 0 4px;
    font-size: 11px;
    line-height: 16px;
}
```
